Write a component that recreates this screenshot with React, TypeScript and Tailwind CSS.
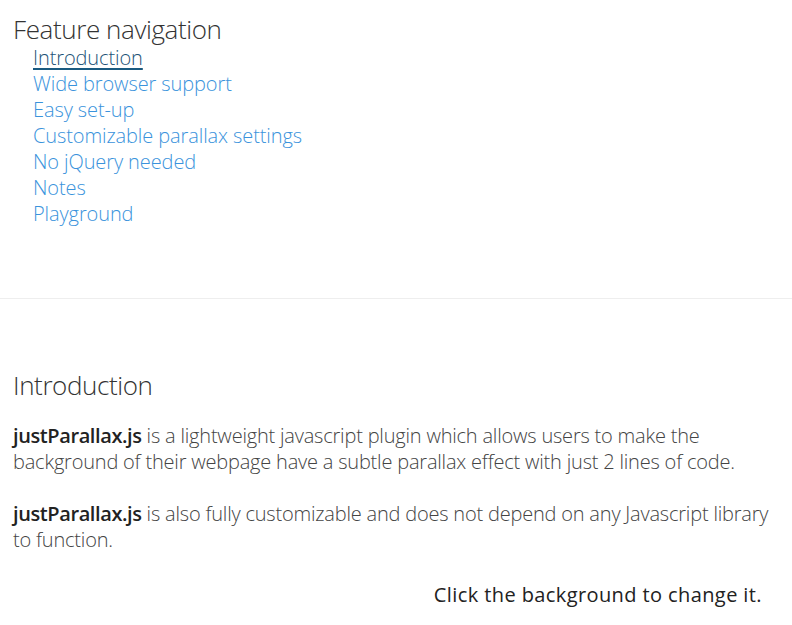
const links = [
  "Introduction",
  "Wide browser support",
  "Easy set-up",
  "Customizable parallax settings",
  "No jQuery needed",
  "Notes",
  "Playground",
];

export default function App() {
  return (
    <div className="min-h-[625px] bg-white font-['Open_Sans',sans-serif] font-light text-[#444]">
      <section className="px-[13px] pt-[13px] pb-[71px]">
        <h2 className="text-[26px] leading-[32px] font-light tracking-[-0.4px] text-[#333]">Feature navigation</h2>
        <ul className="pl-5">
          {links.map((l, i) => (
            <li key={l} className="text-[20px] leading-[26px] tracking-[-0.1px]">
              <a
                href="#"
                className={
                  i === 0
                    ? "text-[#1d5377] underline decoration-[#1a5a80] decoration-2 underline-offset-[3px]"
                    : "text-[#3a93dc]"
                }
              >
                {l}
              </a>
            </li>
          ))}
        </ul>
      </section>

      <hr className="border-t border-[#eeeeee]" />

      <section className="px-[13px] pt-[70px]">
        <h2 className="text-[26px] leading-[32px] font-light tracking-[-0.4px] text-[#333]">Introduction</h2>
        <p className="mt-[22px] text-[20px] leading-[26px] tracking-[-0.2px]">
          <b className="font-semibold tracking-[-0.4px] text-[#222]">justParallax.js</b> is a lightweight javascript
          plugin which allows users to make the background of their webpage have a subtle parallax effect with just 2
          lines of code.
        </p>
        <p className="mt-[26px] text-[20px] leading-[26px] tracking-[-0.2px]">
          <b className="font-semibold tracking-[-0.4px] text-[#222]">justParallax.js</b> is also fully customizable
          and does not depend on any Javascript library to function.
        </p>
        <p className="mt-[29px] pr-[17px] text-right text-[20px] leading-[26px] font-normal tracking-[0.4px] text-[#222]">
          Click the background to change it.
        </p>
      </section>
    </div>
  );
}
